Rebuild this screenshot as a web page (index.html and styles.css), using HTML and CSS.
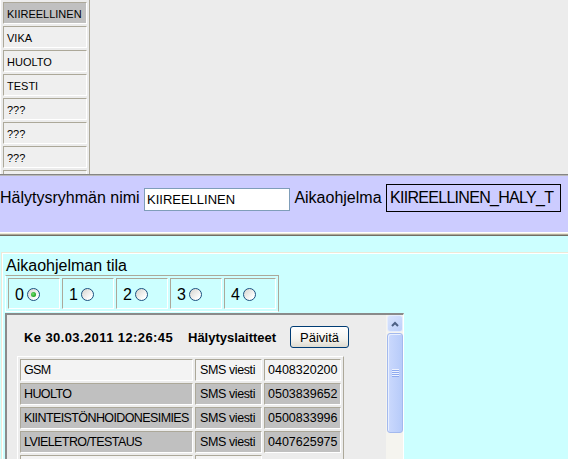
FILE: index.html
```html
<!DOCTYPE html>
<html lang="fi">
<head>
<meta charset="utf-8">
<title>Hälytysryhmät</title>
<link rel="stylesheet" href="styles.css">
</head>
<body>
<div class="frame-top">
  <table class="groups">
    <tr><td class="sel">KIIREELLINEN</td></tr>
    <tr><td>VIKA</td></tr>
    <tr><td>HUOLTO</td></tr>
    <tr><td>TESTI</td></tr>
    <tr><td>???</td></tr>
    <tr><td>???</td></tr>
    <tr><td>???</td></tr>
    <tr><td>&nbsp;</td></tr>
  </table>
</div>
<div class="sep-top"></div>
<div class="frame-mid">
  <div class="namerow">
    <span class="lbl">Hälytysryhmän nimi</span>
    <input class="name-input" type="text" value="KIIREELLINEN">
    <span class="lbl">Aikaohjelma</span>
    <div class="schedule">KIIREELLINEN_HALY_T</div>
  </div>
</div>
<div class="sep-bot"></div>
<div class="frame-bot">
  <div class="state">
    <div class="state-title">Aikaohjelman tila</div>
    <table class="modes">
      <tr>
        <td><span class="num">0</span><span class="radio checked"></span></td>
        <td><span class="num">1</span><span class="radio"></span></td>
        <td><span class="num">2</span><span class="radio"></span></td>
        <td><span class="num">3</span><span class="radio"></span></td>
        <td><span class="num">4</span><span class="radio"></span></td>
      </tr>
    </table>
    <div class="panel">
      <div class="panel-body">
        <div class="panel-head">
          <span class="stamp">Ke 30.03.2011 12:26:45</span>
          <span class="devs">Hälytyslaitteet</span>
          <button class="refresh" type="button">Päivitä</button>
        </div>
        <table class="devices">
          <tr class="light"><td class="c1">GSM</td><td class="c2">SMS viesti</td><td class="c3">0408320200</td></tr>
          <tr class="alt"><td class="c1">HUOLTO</td><td class="c2">SMS viesti</td><td class="c3">0503839652</td></tr>
          <tr class="alt"><td class="c1">KIINTEISTÖNHOIDONESIMIES</td><td class="c2">SMS viesti</td><td class="c3">0500833996</td></tr>
          <tr class="alt"><td class="c1">LVIELETRO/TESTAUS</td><td class="c2">SMS viesti</td><td class="c3">0407625975</td></tr>
          <tr class="light"><td class="c1">&nbsp;</td><td class="c2">&nbsp;</td><td class="c3 none"></td></tr>
        </table>
      </div>
      <div class="scrollbar">
        <div class="sb-btn">
          <svg width="8" height="6" viewBox="0 0 8 6"><polyline points="1,5 4,2 7,5" fill="none" stroke="#4d6185" stroke-width="2"/></svg>
        </div>
        <div class="sb-thumb">
          <svg width="7" height="8" viewBox="0 0 7 8">
            <rect x="0" y="0" width="7" height="1" fill="#eef3fe"/>
            <rect x="0" y="1" width="7" height="1" fill="#8eaaf0"/>
            <rect x="0" y="2" width="7" height="1" fill="#eef3fe"/>
            <rect x="0" y="3" width="7" height="1" fill="#8eaaf0"/>
            <rect x="0" y="4" width="7" height="1" fill="#eef3fe"/>
            <rect x="0" y="5" width="7" height="1" fill="#8eaaf0"/>
            <rect x="0" y="6" width="7" height="1" fill="#eef3fe"/>
            <rect x="0" y="7" width="7" height="1" fill="#8eaaf0"/>
          </svg>
        </div>
        <div class="sb-track"></div>
      </div>
    </div>
  </div>
</div>
</body>
</html>
```

FILE: styles.css
```css
* { box-sizing: border-box; }
html, body { margin: 0; padding: 0; }
body {
  width: 568px;
  height: 459px;
  overflow: hidden;
  background: #ccffff;
  color: #000;
  font-family: "Liberation Sans", Arial, sans-serif;
}

/* top frame: group list */
.frame-top {
  height: 174px;
  background: #ececec;
  overflow: hidden;
}
.groups {
  width: 90px;
  margin-top: -1px;
  border-collapse: separate;
  border-spacing: 2px;
  border: 1px solid;
  border-color: #fff #aca899 #aca899 #fff;
  font-size: 11px;
}
.groups td {
  height: 22px;
  padding: 2px 3px 0;
  border: 1px solid;
  border-color: #aca899 #fff #fff #aca899;
  background: #efefef;
  white-space: nowrap;
  vertical-align: middle;
  line-height: 13px;
}
.groups td.sel { background: #c0c0c0; }

.sep-top {
  height: 2px;
  background: linear-gradient(#858585 0 1px, #b8b8b8 1px 2px);
}
.sep-bot {
  height: 4px;
  background: linear-gradient(#ffffff 0 1px, #ece9d8 1px 2px, #aca899 2px 3px, #716f64 3px 4px);
}

/* middle frame */
.frame-mid {
  height: 56px;
  background: #ccccff;
  padding-top: 8px;
}
.namerow {
  display: flex;
  align-items: center;
  gap: 4.4px;
  height: 28px;
}
.lbl {
  font-size: 16px;
  line-height: 18px;
  white-space: nowrap;
}
.name-input {
  width: 146px;
  height: 23px;
  margin: 2px 0 0;
  padding: 0 2px;
  border: 1px solid #7f9db9;
  background: #fff;
  font: 13px "Liberation Sans", Arial, sans-serif;
  color: #000;
  outline: none;
}
.schedule {
  width: 175px;
  height: 28px;
  border: 1px solid #000;
  padding-left: 3px;
  font-size: 16px;
  line-height: 26px;
  letter-spacing: -0.7px;
  white-space: nowrap;
  overflow: hidden;
}

/* bottom frame */
.frame-bot {
  height: 223px;
  padding-top: 16px;
  overflow: hidden;
}
.state {
  height: 207px;
  margin-left: 1px;
  padding: 4px 0 0 3px;
  border-top: 1px solid #ece9d8;
  border-left: 1px solid #ece9d8;
  box-shadow: inset 1px 1px #ffffff;
}
.state-title {
  margin-left: 1px;
  font-size: 16px;
  line-height: 18px;
}
.modes {
  border-collapse: separate;
  border-spacing: 2px;
  border: 1px solid;
  border-color: #aca899 #aca899 #fff #fff;
  font-size: 16px;
}
.modes td {
  width: 52px;
  height: 31px;
  padding: 2px 0 0 6px;
  border: 1px solid;
  border-color: #aca899 #fff #fff #aca899;
  vertical-align: middle;
  line-height: 18px;
  white-space: nowrap;
}
.radio {
  display: inline-block;
  position: relative;
  width: 13px;
  height: 13px;
  margin-left: 3px;
  vertical-align: -1px;
  border: 1px solid #1c5180;
  border-radius: 50%;
  background: linear-gradient(135deg, #d6d4ce, #ffffff 80%);
}
.radio.checked::after {
  content: "";
  position: absolute;
  left: 3px;
  top: 3px;
  width: 5px;
  height: 5px;
  border-radius: 50%;
  background: radial-gradient(circle at 40% 40%, #6ee06e, #21a121 70%);
}

/* inner panel */
.panel {
  display: flex;
  width: 399px;
  height: 160px;
  margin-top: 1px;
  border-style: solid;
  border-width: 2px 1px 0 2px;
  border-color: #8a8a8a #ffffff #ffffff #8a8a8a;
  background: #ececec;
}
.panel-body {
  flex: 1;
  padding: 11px 0 0 10px;
}
.panel-head {
  display: flex;
  align-items: center;
  height: 22px;
  padding-left: 7px;
  font-size: 13px;
}
.stamp {
  width: 164px;
  font-weight: bold;
  letter-spacing: 0.4px;
  white-space: nowrap;
}
.devs {
  width: 102px;
  font-weight: bold;
  white-space: nowrap;
}
.refresh {
  width: 59px;
  height: 22px;
  margin: 0;
  padding: 0;
  border: 1px solid #003c74;
  border-radius: 3px;
  background: linear-gradient(#ffffff, #f4f3ee 60%, #dedbd0);
  font: 13px "Liberation Sans", Arial, sans-serif;
  color: #000;
}
.devices {
  width: 327px;
  margin-top: 8px;
  table-layout: fixed;
  border-collapse: separate;
  border-spacing: 2px;
  border: 1px solid;
  border-color: #fff #aca899 #aca899 #fff;
  font-size: 12.5px;
}
.devices td {
  height: 22px;
  padding: 0 3px;
  border: 1px solid;
  border-color: #aca899 #fff #fff #aca899;
  white-space: nowrap;
  overflow: hidden;
  vertical-align: middle;
  line-height: 14px;
}
.devices .c1 { width: 173px; letter-spacing: -0.6px; }
.devices .c2 { width: 67px; padding-left: 4px; letter-spacing: -0.4px; }
.devices .c3 { width: 77px; }
.devices tr.light td { background: #f3f3f3; }
.devices tr.alt td { background: #c0c0c0; }
.devices td.none { border-color: transparent; background: transparent !important; }

/* scrollbar */
.scrollbar {
  flex: none;
  display: flex;
  flex-direction: column;
  width: 17px;
  padding-left: 1px;
  background: #f5f4ef;
}
.sb-btn {
  height: 17px;
  display: flex;
  align-items: center;
  justify-content: center;
  border: 1px solid #e6edfd;
  border-radius: 3px;
  background: linear-gradient(135deg, #d9e4fd, #bdd0fa);
}
.sb-thumb {
  height: 100px;
  margin-top: 1px;
  padding-top: 35px;
  display: flex;
  justify-content: center;
  align-items: flex-start;
  border: 1px solid #a3b9ee;
  border-radius: 3px;
  background: linear-gradient(90deg, #cbd9fd, #b7cbf9);
  box-shadow: inset 1px 1px #e9f0ff;
}
.sb-track { flex: 1; }
```
